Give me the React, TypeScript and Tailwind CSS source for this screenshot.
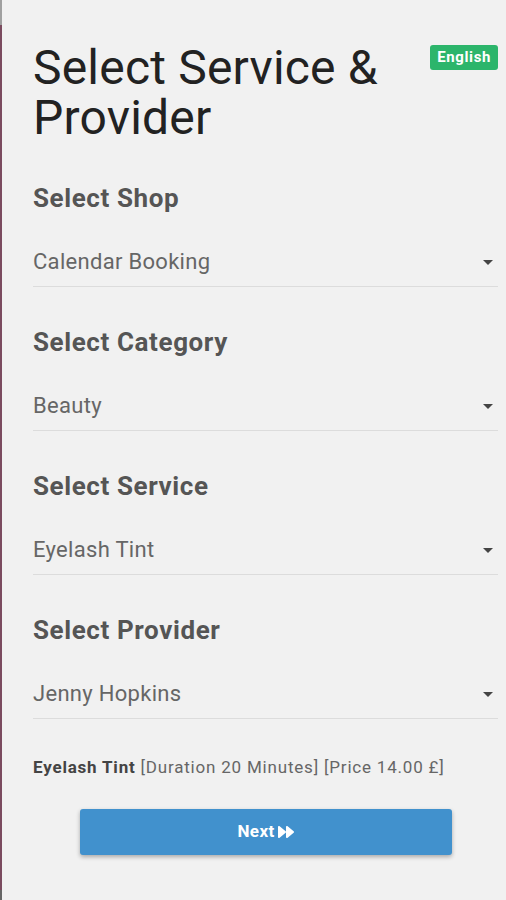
import { FaForward } from "react-icons/fa";

const selects = [
  { label: "Select Shop", value: "Calendar Booking" },
  { label: "Select Category", value: "Beauty" },
  { label: "Select Service", value: "Eyelash Tint" },
  { label: "Select Provider", value: "Jenny Hopkins" },
];

function SelectField({ label, value }: { label: string; value: string }) {
  return (
    <div className="flex flex-col">
      <h2 className="text-[26px] leading-[30px] font-bold tracking-[0.6px] text-[#555]">{label}</h2>
      <div className="mt-[34px] flex items-center justify-between pb-[9px] border-b border-[#dcdcdc]">
        <span className="text-[22px] leading-[30px] tracking-[0.3px] text-[#666]">{value}</span>
        <span className="mr-[5px] w-0 h-0 border-l-[5px] border-r-[5px] border-t-[5px] border-l-transparent border-r-transparent border-t-[#444]" />
      </div>
    </div>
  );
}

export default function App() {
  return (
    <div className="min-h-[900px] flex bg-[#f1f1f1] font-['Roboto',sans-serif]">
      {/* left window edge */}
      <div className="w-[2px] flex flex-col">
        <div className="h-[25px] bg-[#a0a0a0]" />
        <div className="flex-1 bg-[#7b4b5f]" />
        <div className="h-[10px] bg-[#666]" />
      </div>

      <div className="flex-1 pl-[31px] pr-[8px] pt-[43px]">
        <div className="flex items-start justify-between">
          <h1 className="text-[48px] leading-[50px] tracking-[0.2px] text-[#222] max-w-[385px]">
            Select Service &amp; Provider
          </h1>
          <span className="mt-[2px] h-[25px] px-[7px] flex items-center rounded-[3px] bg-[#2cb56b] text-white text-[15px] font-bold tracking-[0.6px]">
            English
          </span>
        </div>

        <div className="mt-[40px] flex flex-col gap-[40px]">
          {selects.map((s) => (
            <SelectField key={s.label} label={s.label} value={s.value} />
          ))}
        </div>

        <p className="mt-[36px] text-[17px] leading-[24px] tracking-[0.8px] text-[#666]">
          <span className="font-bold text-[#444]">Eyelash Tint</span> [Duration 20 Minutes] [Price 14.00 £]
        </p>

        <div className="mt-[30px] flex justify-center">
          <button className="w-[372px] h-[46px] flex items-center justify-center gap-[3px] rounded-[3px] bg-[#4191cd] text-white text-[17px] font-bold tracking-[0.4px] shadow-[0_2px_4px_rgba(0,0,0,0.3)]">
            Next <FaForward className="text-[16px]" />
          </button>
        </div>
      </div>
    </div>
  );
}
